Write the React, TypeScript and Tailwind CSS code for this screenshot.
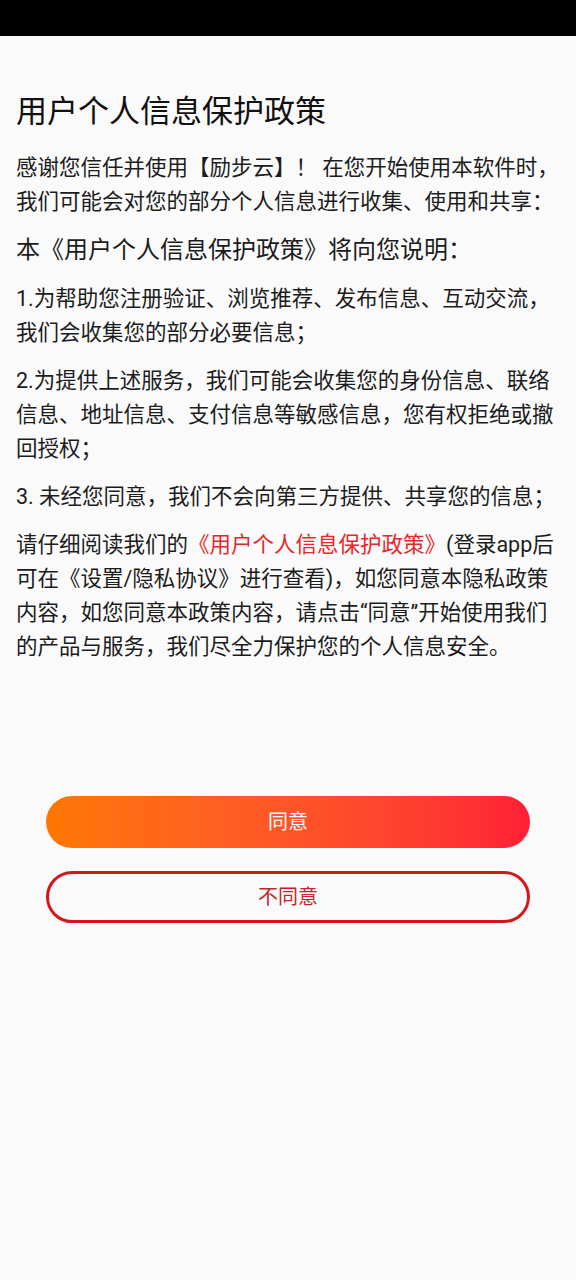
import React from 'react';

const font = { fontFamily: 'Roboto, "Noto Sans CJK SC", "Noto Sans", sans-serif' };

export default function App() {
  return (
    <div className="w-[576px] h-[1280px] bg-[#fafafa] flex flex-col" style={font}>
      {/* status bar */}
      <div className="h-[36px] bg-black shrink-0" />

      <div className="px-4 pt-[56px] text-[#1c1c1c] text-[21.5px] leading-[34px]">
        <h1 className="text-[31px] leading-[40px] text-[#111] mb-[19px]">用户个人信息保护政策</h1>

        <p>感谢您信任并使用【励步云】！ 在您开始使用本软件时，我们可能会对您的部分个人信息进行收集、使用和共享：</p>
        <p className="mt-[14px] text-[24px]">本《用户个人信息保护政策》将向您说明：</p>
        <p className="mt-[15px]">1.为帮助您注册验证、浏览推荐、发布信息、互动交流，我们会收集您的部分必要信息；</p>
        <p className="mt-[14px]">2.为提供上述服务，我们可能会收集您的身份信息、联络信息、地址信息、支付信息等敏感信息，您有权拒绝或撤回授权；</p>
        <p className="mt-[14px]">3. 未经您同意，我们不会向第三方提供、共享您的信息；</p>
        <p className="mt-[14px]">
          请仔细阅读我们的<span className="text-[#e8262b]">《用户个人信息保护政策》</span>(登录app后可在《设置/隐私协议》进行查看)，如您同意本隐私政策内容，如您同意本政策内容，请点击“同意”开始使用我们的产品与服务，我们尽全力保护您的个人信息安全。
        </p>
      </div>

      <div className="px-[46px] pt-[132px] flex flex-col gap-[23px]">
        <button className="h-[52px] rounded-full bg-gradient-to-r from-[#ff7700] to-[#ff1e36] text-white text-[20px]">
          同意
        </button>
        <button className="h-[52px] rounded-full border-[3px] border-[#d4161d] text-[#c4262b] text-[20px]">
          不同意
        </button>
      </div>
    </div>
  );
}
